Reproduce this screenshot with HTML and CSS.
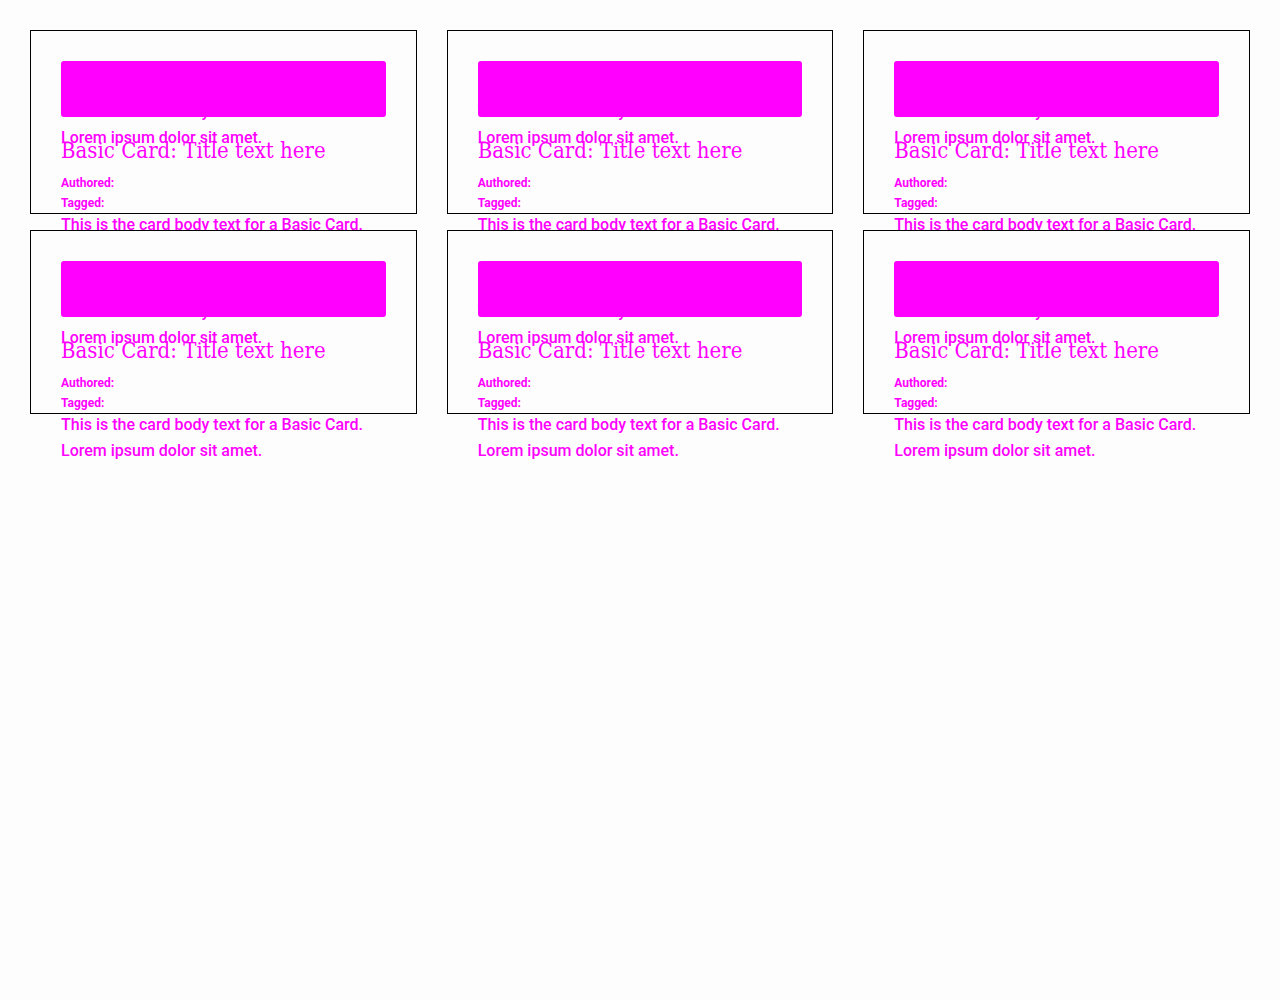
FILE: index.html
```html
<!DOCTYPE html>
<html lang="en">
<head>
<meta charset="utf-8">
<title>Basic Cards</title>
<link rel="stylesheet" href="styles.css">
</head>
<body>
<main class="grid">
  <article class="card">
    <div class="media"></div>
    <p class="body body-under">This is the card body text for a Basic Card.<br>Lorem ipsum dolor sit amet.</p>
    <h2 class="title">Basic Card: Title text here</h2>
    <div class="meta"><span>Authored:</span><span>Tagged:</span></div>
    <p class="body body-after">This is the card body text for a Basic Card.<br>Lorem ipsum dolor sit amet.</p>
  </article>
  <article class="card">
    <div class="media"></div>
    <p class="body body-under">This is the card body text for a Basic Card.<br>Lorem ipsum dolor sit amet.</p>
    <h2 class="title">Basic Card: Title text here</h2>
    <div class="meta"><span>Authored:</span><span>Tagged:</span></div>
    <p class="body body-after">This is the card body text for a Basic Card.<br>Lorem ipsum dolor sit amet.</p>
  </article>
  <article class="card">
    <div class="media"></div>
    <p class="body body-under">This is the card body text for a Basic Card.<br>Lorem ipsum dolor sit amet.</p>
    <h2 class="title">Basic Card: Title text here</h2>
    <div class="meta"><span>Authored:</span><span>Tagged:</span></div>
    <p class="body body-after">This is the card body text for a Basic Card.<br>Lorem ipsum dolor sit amet.</p>
  </article>
  <article class="card">
    <div class="media"></div>
    <p class="body body-under">This is the card body text for a Basic Card.<br>Lorem ipsum dolor sit amet.</p>
    <h2 class="title">Basic Card: Title text here</h2>
    <div class="meta"><span>Authored:</span><span>Tagged:</span></div>
    <p class="body body-after">This is the card body text for a Basic Card.<br>Lorem ipsum dolor sit amet.</p>
  </article>
  <article class="card">
    <div class="media"></div>
    <p class="body body-under">This is the card body text for a Basic Card.<br>Lorem ipsum dolor sit amet.</p>
    <h2 class="title">Basic Card: Title text here</h2>
    <div class="meta"><span>Authored:</span><span>Tagged:</span></div>
    <p class="body body-after">This is the card body text for a Basic Card.<br>Lorem ipsum dolor sit amet.</p>
  </article>
  <article class="card">
    <div class="media"></div>
    <p class="body body-under">This is the card body text for a Basic Card.<br>Lorem ipsum dolor sit amet.</p>
    <h2 class="title">Basic Card: Title text here</h2>
    <div class="meta"><span>Authored:</span><span>Tagged:</span></div>
    <p class="body body-after">This is the card body text for a Basic Card.<br>Lorem ipsum dolor sit amet.</p>
  </article>
</main>
</body>
</html>
```
FILE: styles.css
```css
html {
  margin: 0;
  padding: 0;
  background: #fdfdfd;
}

body {
  margin: 0;
  padding: 0;
  min-height: 100vh;
  font-family: Roboto, "Liberation Sans", sans-serif;
  color: #ff00ff;
}

.grid {
  display: grid;
  grid-template-columns: repeat(3, 1fr);
  column-gap: 30px;
  row-gap: 16px;
  padding: 30px 30px 80px;
}

.card {
  position: relative;
  z-index: 0;
  display: flex;
  flex-direction: column;
  box-sizing: border-box;
  height: 184px;
  border: 1px solid #000;
  padding: 30px;
  min-width: 0;
  background: #fdfdfd;
}

.media {
  position: relative;
  z-index: 1;
  height: 56px;
  flex: none;
  background: #ff00ff;
  border-radius: 3px;
  margin-bottom: -18px;
}

.body {
  margin: 0;
  font-size: 16px;
  font-weight: 500;
  line-height: 25.6px;
  white-space: nowrap;
  flex: none;
}

.title {
  margin: -12.4px 0 0;
  font-family: "DejaVu Serif Condensed", "DejaVu Serif", serif;
  font-weight: normal;
  font-size: 22px;
  line-height: 26.4px;
  white-space: nowrap;
  flex: none;
}

.meta {
  display: flex;
  flex-direction: column;
  margin-top: 9px;
  font-size: 12px;
  font-weight: 700;
  line-height: 20px;
  flex: none;
}

.body-after {
  margin-top: -1px;
}
```
